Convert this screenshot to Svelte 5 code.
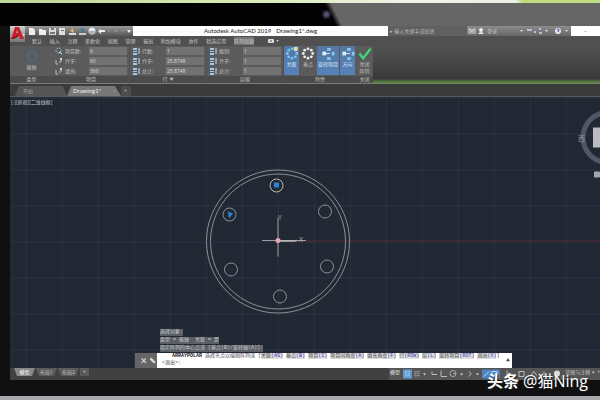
<script>
    const menus = ['默认', '插入', '注释', '参数化', '视图', '管理', '输出', '附加模块', '协作', '精选应用', '阵列创建']

    let groups = [
        {name: '项目', icon: 'dots', fields: [
            {id: 'count', label: '项目数:', value: '6'},
            {id: 'between', label: '介于:', value: '60'},
            {id: 'fill', label: '填充:', value: '360'}
        ]},
        {name: '行', arrow: true, icon: 'rows', fields: [
            {id: 'rows', label: '行数:', value: '1'},
            {id: 'row-between', label: '介于:', value: '25.8748'},
            {id: 'row-total', label: '总计:', value: '25.8748'}
        ]},
        {name: '层级', icon: 'rows', fields: [
            {id: 'levels', label: '级别:', value: '1'},
            {id: 'level-between', label: '介于:', value: '1'},
            {id: 'level-total', label: '总计:', value: '1'}
        ]}
    ]

    const history = ['选择对象:', '类型 = 极轴  关联 = 是', '指定阵列的中心点或 [基点(B)/旋转轴(A)]:']

    const options = [
        ['关联', 'AS'], ['基点', 'B'], ['项目', 'I'], ['项目间角度', 'A'], ['填充角度', 'F'],
        ['行', 'ROW'], ['层', 'L'], ['旋转项目', 'ROT'], ['退出', 'X']
    ]

    const tools = [
        {label: '关联', on: true},
        {label: '基点', on: false},
        {label: '旋转项目', on: true},
        {label: '方向', on: true}
    ]

    const ring = [0, 45, 90, 135, 180, 225, 270, 315].map(a => ({
        x: 8 + 5 * Math.cos(a * Math.PI / 180),
        y: 8 + 5 * Math.sin(a * Math.PI / 180)
    }))

    const holes = [
        {x: 315, y: 115}, {x: 317, y: 170}, {x: 270, y: 200}, {x: 221, y: 173}
    ]
</script>

<div class="laptop">
    <div class="desk"></div>
    <div class="bezel-top"><span class="camera"></span></div>

    <div class="screen">
        <header>
            <button class="logo" aria-label="AutoCAD">
                <svg viewBox="0 0 15 16"><path d="M1 13 L5 1 L9 1 L14 13 L10 13 L9 10 L5 10 L4 13 Z M6 7 L8 7 L7 4 Z" fill="#c9202c" fill-rule="evenodd"/><path d="M1 13 L7 9 L9 10 L4 13 Z" fill="#8d1019"/><path d="M12 8h3l-1.500 2z" fill="#ddd"/></svg>
            </button>
            <div class="bars">
                <div class="titlebar">
                    <div class="quick">
                        <svg viewBox="0 0 108 10">
                            <path d="M4 2h4l2 2v5h-6zM14 3h3l1 1h3v5h-7z" fill="#eee"/>
                            <path d="M24 2h7v7h-7zM34 2h6v7h-6z" fill="#ddd"/>
                            <path d="M26 2h3v2h-3zM25 6h5v2h-5zM36 4h3v1h-3z" fill="#777"/>
                            <path d="M44 7h7v2h-7z" fill="#ddd"/><path d="M45 5l3-3 1 5z" fill="#d8b860"/>
                            <path d="M54 7h7v2h-7z" fill="#ccc"/><path d="M56 2h3v4h-3z" fill="#4d7892"/>
                            <circle cx="67" cy="5" r="3.500" fill="#e5edf4"/><path d="M64 5h6v3h-6z" fill="#a7b6c1"/>
                            <path d="M73 5l3-2v1h4v2h-4v2z" fill="#eee"/>
                            <path d="M83 5h2M89 5h4M97 5h2" stroke="#999"/>
                            <path d="M102 4h4l-2 3z" fill="#eee"/>
                        </svg>
                    </div>
                    <div class="title"><span>Autodesk AutoCAD 2019</span><span>Drawing1*.dwg</span></div>
                    <input class="search" aria-label="搜索" placeholder="▸ 输入关键字或短语">
                    <div class="account">
                        <svg viewBox="0 0 20 10"><path d="M2 8v-5h2v5M6 8v-5h2v5M4 5h2" fill="none" stroke="#ddd"/><circle cx="14" cy="4" r="2" fill="#eee"/><path d="M11 8q3-4 6 0z" fill="#eee"/></svg>
                        <span>登录</span>
                        <svg class="marks" viewBox="0 0 56 10"><path d="M5 4h3l-1.500 2zM30 4h3l-1.500 2zM50 4h3l-1.500 2z" fill="#ddd"/><path d="M12 4h5M19 6h2M24 3h2M24 7h3" stroke="#cfd6f5" stroke-width="1.500"/><circle cx="43" cy="5" r="3" fill="#e6e9f3"/><path d="M42 4q2-2 2 0l-1 2" fill="none" stroke="#354a83"/></svg>
                    </div>
                    <button class="minimize" aria-label="最小化">–</button>
                </div>
                <nav>
                    <div class="menus">
                        {#each menus as menu, i}
                            <button class:current={i === 10}>{menu}</button>
                        {/each}
                    </div>
                    <svg viewBox="0 0 12 8"><rect x="0" y="2" width="6" height="4" rx="1" fill="#ddd"/><path d="M2 4h2" stroke="#555"/><path d="M8 3h3l-1.500 2z" fill="#bbb"/></svg>
                </nav>
            </div>
        </header>

        <div class="ribbon">
            <section class="type">
                <button class="tool">
                    <svg viewBox="0 0 16 16">{#each ring as p}<circle cx={p.x} cy={p.y} r="1.500" fill="#4d6b88"/>{/each}</svg>
                    <span>极轴</span>
                </button>
                <h2>类型</h2>
            </section>
            {#each groups as group}
                <section class="fields">
                    <div class="rows">
                        {#each group.fields as field, i}
                            <div class="field">
                                <svg viewBox="0 0 8 8">
                                    {#if group.icon === 'dots' && i === 0}
                                        <circle cx="3.500" cy="3.500" r="2.500" fill="none" stroke="#8ec5ee" stroke-dasharray="2 1"/><path d="M4 5l3 2" stroke="#eee"/>
                                    {:else if group.icon === 'dots'}
                                        <path d="M1 3v4h2M4 5h2M6 1v4" fill="none" stroke="#bbb"/><circle cx="6" cy="2" r="1" fill="#eee"/>
                                    {:else}
                                        <path d="M1 1h4v2h-4zM1 4h4v1h-4zM1 6h4v2h-4z" fill="#9dcbf0"/><path d="M7 1v6" stroke="#ddd"/>
                                    {/if}
                                </svg>
                                <label for={field.id}>{field.label}</label>
                                <input id={field.id} bind:value={field.value}>
                            </div>
                        {/each}
                    </div>
                    <h2>{group.name}{#if group.arrow}<small>▼</small>{/if}</h2>
                </section>
            {/each}
            <section class="props">
                <div class="tools">
                    {#each tools as tool, n}
                        <button class="tool" class:on={tool.on}>
                            <svg viewBox="0 0 16 16">
                                {#if n < 2}
                                    {#each ring as p}<circle cx={p.x} cy={p.y} r="1.500" fill={tool.on ? '#79c4f5' : '#eee'}/>{/each}
                                    {#if n === 0}<path d="M10 1h4v4h-4z" fill="#e9dda0"/>{/if}
                                {:else}
                                    <path d="M7 2h4v3h-4zM12 6h3v4h-3zM7 12h4v3h-4z" fill="#83c8f4"/><path d="M2 6h4v4h-4z" fill="#d6efff"/><path d="M6 8h4" stroke="#d6efff"/>
                                {/if}
                            </svg>
                            <span>{tool.label}</span>
                        </button>
                    {/each}
                </div>
                <h2>特性</h2>
            </section>
            <section class="close">
                <button class="tool">
                    <svg viewBox="0 0 16 16"><path d="M2 8l4 5 8-10" fill="none" stroke="#42d877" stroke-width="2.500"/></svg>
                    <span>关闭<br>阵列</span>
                </button>
                <h2>关闭</h2>
            </section>
        </div>

        <div class="files">
            <button class="start">开始</button>
            <button class="active">Drawing1* <i>×</i></button>
            <button class="add" aria-label="新建">+</button>
        </div>

        <main>
            <svg class="drawing" viewBox="0 0 590 272" preserveAspectRatio="xMidYMid slice">
                <defs>
                    <pattern id="minor" x="16" y="1" width="7.200" height="7.200" patternUnits="userSpaceOnUse"><path d="M0 0H8M0 0V8" stroke="#242d39" stroke-width="0.500" fill="none"/></pattern>
                    <pattern id="major" x="16" y="1" width="36" height="36" patternUnits="userSpaceOnUse"><path d="M0 .5H36M.5 0V36" stroke="#28323e" fill="none"/></pattern>
                </defs>
                <rect width="590" height="272" fill="#212834"/>
                <rect width="590" height="272" fill="url(#minor)"/>
                <rect width="590" height="272" fill="url(#major)"/>
                <path d="M268 144.500H590" stroke="#582936"/>
                <g fill="none" stroke="#8b9097">
                    <circle cx="268" cy="145" r="71.500"/>
                    <circle cx="268" cy="145" r="67.500"/>
                    {#each holes as hole}<circle cx={hole.x} cy={hole.y} r="6.500"/>{/each}
                    <circle cx="266.500" cy="89" r="6.500" stroke="#b9b9ac"/>
                    <circle cx="219.500" cy="118" r="6.500"/>
                    <path d="M252 144H296M268 121V160" stroke="#9b9fa5"/>
                </g>
                <rect x="264" y="86" width="5" height="5" fill="#2885dc"/>
                <path d="M218 115l5 2-4 5z" fill="#2885dc"/>
                <path d="M268 144.500h16l3-.5" stroke="#bbb" stroke-width="1.500" fill="none"/>
                <circle cx="268" cy="144" r="2.500" fill="#eda5b0"/>
                <text x="268" y="123">Y</text>
                <text x="289" y="145">X</text>
                <circle cx="598" cy="41" r="25" fill="none" stroke="#515764" stroke-width="5"/>
                <rect x="583" y="31" width="7" height="20" fill="#b9bbc0"/>
                <rect x="584" y="75" width="6" height="6" rx="1" fill="#a4a7ae"/>
                <text class="west" x="568" y="44">西</text>
            </svg>
            <div class="view">[-][俯视][二维线框]</div>
            <div class="console">
                {#each history as line}
                    <p>{line}</p>
                {/each}
                <div class="command">
                    <button class="grip" aria-label="自定义">
                        <svg viewBox="0 0 20 12"><path d="M6 4l4 4M10 4l-4 4" stroke="#ddd"/><path d="M14 4l4 4" stroke="#ddd" stroke-width="2"/></svg>
                    </button>
                    <div class="prompt">
                        <div class="line"><b>ARRAYPOLAR</b> 选择夹点以编辑阵列或 [{#each options as [name, key], i}<a href="#{key}">{name}<em>({key})</em></a>{#if i < 8}{' '}{/if}{/each}]</div>
                        <div class="line">&lt;退出&gt;: </div>
                    </div>
                    <span class="up">▲</span>
                </div>
            </div>
        </main>

        <footer>
            <button class="layout model">模型</button>
            <button class="layout">布局1</button>
            <button class="layout">布局2</button>
            <button class="plus" aria-label="新建布局">+</button>
            <div class="status">
                <span class="mode">模型</span>
                <svg viewBox="0 0 160 11">
                    <rect x="0" y="1" width="9" height="9" fill="#5f9bd2"/><path d="M2 3h5M2 5h5M2 7h5M3 2v7M6 2v7" stroke="#a6d0f5" stroke-width=".5"/>
                    <path d="M11 3h6M11 5h6M11 7h6M12 2v7M15 2v7" stroke="#aaa" stroke-width=".5"/>
                    <path d="M20 5h3l-1.500 2zM57 5h3l-1.500 2zM73 5h3l-1.500 2z" fill="#ddd"/>
                    <path d="M29 3v3h5M38 2v6h6M66 3l2 2-2 3" fill="none" stroke="#bbb"/><circle cx="50" cy="5" r="3" fill="none" stroke="#aaa"/><path d="M50 5h3" stroke="#aaa"/>
                    <rect x="79" y="1" width="18" height="9" fill="#4c84c4"/><path d="M81 8l5-5M89 3h5v5h-5z" stroke="#b6dafa" fill="none"/>
                    <path d="M104 2v6h5M116 3h5v5h-5zM128 7l3-4 3 4M141 3v5h5" fill="none" stroke="#bbb"/>
                    <circle cx="154" cy="5" r="3" fill="#ddd"/>
                </svg>
                <span>草图与注释</span><span>▾</span><span>+</span>
            </div>
        </footer>
    </div>

    <div class="bezel-bottom"></div>
    <div class="watermark"><b>头条</b> @猫Ning</div>
</div>

<style>
    :global(body) {
        margin: 0;
        background: #101011;
    }

    button, input {
        font: inherit;
        color: inherit;
        border: 0;
        padding: 0;
        margin: 0;
        background: none;
        min-width: 0;
        box-sizing: border-box;
    }

    .laptop {
        position: relative;
        display: flex;
        flex-direction: column;
        min-height: 100vh;
        overflow: hidden;
        font: 5px/8px "Open Sans", "Noto Sans CJK SC", sans-serif;
        color: #c4c4c4;
        background: #101011;
    }

    .desk {
        height: 3px;
        background: linear-gradient(90deg, #bdd797, #d9ebb5 40%, #f1f4ea 70%, #eceee8 86%, #bfdd7c 87%);
    }

    .bezel-top {
        height: 23px;
        background: linear-gradient(63deg, #030303 0 55%, #666 56%);
        text-align: center;
    }

    .camera {
        display: inline-block;
        width: 5px;
        height: 5px;
        margin: 7px 0 0 52px;
        border-radius: 50%;
        border: 2px solid #242430;
        background: #51506d;
    }

    .screen {
        flex: 1;
        display: flex;
        flex-direction: column;
        margin-left: 10px;
    }

    header {
        display: flex;
        background: #505050;
    }

    .logo {
        width: 15px;
        height: 16px;
        background: linear-gradient(#cfcfcf, #777);
    }

    svg {
        display: block;
    }

    .bars {
        flex: 1;
        min-width: 0;
    }

    .titlebar {
        display: flex;
        height: 10px;
        background: #656565;
    }

    .quick {
        width: 108px;
        background: linear-gradient(#999, #565656);
    }

    .title {
        flex: 1;
        display: flex;
        justify-content: center;
        gap: 5px;
        background: #fdfdfd;
        color: #222;
        font-family: Lato, sans-serif;
        font-size: 6px;
        line-height: 10px;
    }

    .search {
        width: 79px;
        padding-left: 2px;
        background: #606060;
    }

    .search::placeholder {
        color: #bbb;
    }

    .account {
        display: flex;
        align-items: center;
        width: 104px;
        background: linear-gradient(#8c8c8c, #666);
    }

    .account svg:first-child {
        width: 20px;
    }

    .marks {
        width: 56px;
        margin-left: auto;
    }

    .minimize {
        width: 29px;
        background: #fff;
        color: #555;
    }

    nav {
        display: flex;
        align-items: center;
        gap: 14px;
        height: 10px;
        padding-left: 7px;
        background: #505050;
    }

    nav svg {
        width: 12px;
    }

    .menus {
        display: flex;
        justify-content: space-between;
        width: 222px;
    }

    .current {
        background: #777;
    }

    .ribbon {
        display: flex;
        height: 38px;
        background: linear-gradient(#535353, #393939 33px, #4f6f3c 35px, #6d8b5b);
    }

    section {
        display: flex;
        flex-direction: column;
        justify-content: space-between;
        background: #5b5b5b;
        border-bottom: 1px solid #777f70;
        box-sizing: border-box;
    }

    h2 {
        margin: 0;
        font: inherit;
        line-height: 7px;
        text-align: center;
        background: #4b4b4b;
    }

    small {
        margin-left: 2px;
        font-size: 4px;
    }

    .type {
        width: 43px;
    }

    .fields {
        width: 77px;
        border-right: 1px solid #505050;
    }

    .rows {
        display: grid;
        gap: 2px;
        padding: 1px 2px 0;
    }

    .field {
        display: grid;
        grid-template-columns: 8px 22px 1fr;
        gap: 2px;
        align-items: center;
        height: 8px;
    }

    .field input {
        height: 8px;
        width: 100%;
        padding-left: 1px;
        background: #727272;
        color: #ddd;
    }

    .tool {
        display: flex;
        flex-direction: column;
        align-items: center;
        height: 29px;
        line-height: 7px;
    }

    .tool svg {
        width: 16px;
        height: 15px;
        flex: none;
    }

    .type .tool {
        padding-top: 3px;
    }

    .tools {
        display: grid;
        grid-template-columns: 15px 16px 22px 15px;
        gap: 1px;
    }

    .props {
        width: 72px;
    }

    .on {
        background: linear-gradient(#56779f, #5681b9);
        color: #d6e9fb;
    }

    .close {
        width: 17px;
    }

    .files {
        display: flex;
        align-items: flex-end;
        height: 13px;
        padding-left: 5px;
        background: #3c3b3c;
        border-bottom: 1px solid #555960;
        box-sizing: border-box;
        line-height: 10px;
    }

    .files button {
        height: 10px;
        text-align: left;
    }

    .start {
        width: 52px;
        padding-left: 8px;
        background: #555;
        color: #999;
        clip-path: polygon(4px 0, 48px 0, 100% 100%, 0 100%);
    }

    .files .active {
        width: 54px;
        padding-left: 6px;
        background: #777;
        color: #eee;
        font-family: Lato, sans-serif;
        font-size: 6px;
        clip-path: polygon(4px 0, 48px 0, 100% 100%, 0 100%);
    }

    .active i {
        margin-left: 10px;
        font-style: normal;
        color: #999;
    }

    .add {
        width: 10px;
        padding-left: 3px;
        background: #4c4c4c;
    }

    main {
        position: relative;
        flex: 1;
        min-height: 200px;
        background: #212834;
    }

    .drawing {
        position: absolute;
        width: 100%;
        height: 100%;
    }

    .drawing text {
        fill: #aaa;
        font: 7px "Open Sans", sans-serif;
    }

    .drawing .west {
        fill: #8f949e;
        font-family: "Noto Sans CJK SC", sans-serif;
    }

    .view {
        position: absolute;
        left: 1px;
        top: 1px;
    }

    .console {
        position: absolute;
        left: 125px;
        right: 88px;
        bottom: 0;
    }

    .console p {
        width: fit-content;
        margin: 0 0 1px 25px;
        line-height: 7px;
        font-family: "Liberation Mono", "Noto Sans CJK SC", monospace;
        white-space: pre;
        background: #5a5f66;
        color: #ccc;
    }

    .command {
        display: flex;
        height: 15px;
        line-height: 7px;
        background: #fff;
        color: #444;
    }

    .grip {
        width: 22px;
        background: #666;
    }

    .prompt {
        flex: 1;
        min-width: 0;
        padding-left: 5px;
        font-family: "Liberation Mono", "Noto Sans CJK SC", monospace;
        white-space: nowrap;
    }

    .line b {
        margin-left: 10px;
        color: #222;
    }

    .line a {
        color: #444;
        text-decoration: none;
        background: #ddd;
    }

    .line em {
        font-style: normal;
        color: #3c32b0;
    }

    .up {
        align-self: center;
        padding-right: 2px;
        font-size: 4px;
    }

    footer {
        display: flex;
        gap: 1px;
        height: 12px;
        padding-left: 4px;
        background: #414142;
        line-height: 9px;
    }

    .layout {
        width: 21px;
        height: 8px;
        background: #5b5b5b;
        line-height: 8px;
        clip-path: polygon(0 0, 100% 0, 18px 100%, 3px 100%);
    }

    .model {
        background: #888;
        color: #fff;
    }

    .plus {
        width: 9px;
        height: 8px;
        line-height: 8px;
        background: #5b5b5b;
    }

    .status {
        display: flex;
        gap: 2px;
        margin-left: auto;
        background: #555;
    }

    .mode {
        padding: 0 1px;
        color: #eee;
    }

    .status svg {
        width: 160px;
    }

    .bezel-bottom {
        height: 16px;
        border-bottom: 4px solid #aaa9ad;
        background: #101011;
    }

    .watermark {
        position: absolute;
        right: 12px;
        bottom: 9px;
        font: 16px/20px "Open Sans", "Noto Sans CJK SC", sans-serif;
        color: #fff;
        text-shadow: 1px 1px 1px #222;
    }
</style>
